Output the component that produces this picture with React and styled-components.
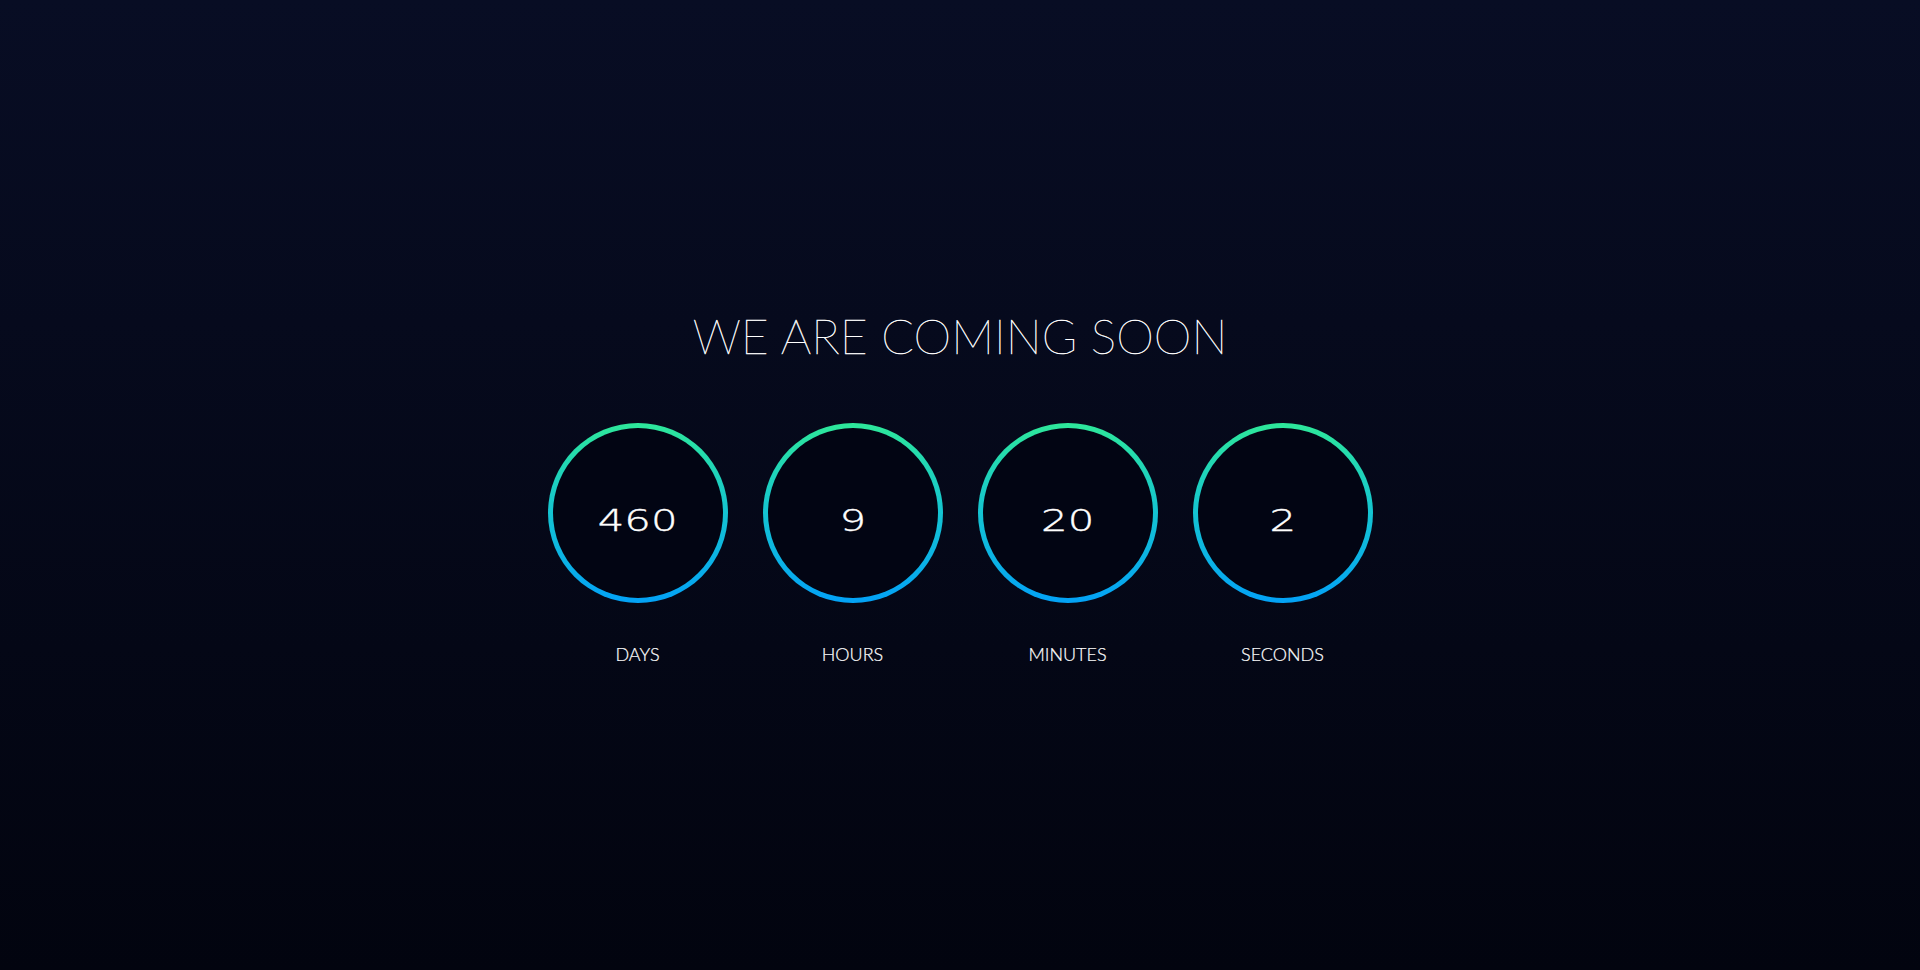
import React from 'react';
import styled, { createGlobalStyle } from 'styled-components';

const GlobalStyle = createGlobalStyle`
    html, body {
        margin: 0;
        padding: 0;
        height: 100%;
    }
    body {
        background: #02040f;
        font-family: Lato, "Open Sans", sans-serif;
        color: #fff;
    }
    #root {
        height: 100%;
    }
`;

// --- Styled Components ---
const Page = styled.main`
    height: 970px;
    display: flex;
    flex-direction: column;
    align-items: center;
    background: linear-gradient(to bottom, #080d24 0%, #02040f 100%);
    overflow: hidden;
`;

const Title = styled.h1`
    margin: 312px 0 0;
    font-family: Lato, sans-serif;
    font-weight: 100;
    font-size: 48px;
    line-height: 48px;
    text-transform: uppercase;
    color: #ffffff;
    -webkit-text-stroke: 0.45px #ffffff;
`;

const Timer = styled.div`
    display: flex;
    gap: 35px;
    margin-top: 63px;
`;

const Unit = styled.div`
    display: flex;
    flex-direction: column;
    align-items: center;
    width: 180px;
`;

const Ring = styled.div`
    width: 180px;
    height: 180px;
    border-radius: 50%;
    padding: 5px;
    box-sizing: border-box;
    background: linear-gradient(to bottom, #2ee89a 0%, #14c4d2 50%, #03a2f6 100%);
    display: flex;
`;

const RingInner = styled.div`
    flex: 1;
    border-radius: 50%;
    background: #020513;
    display: flex;
    align-items: center;
    justify-content: center;
`;

const Value = styled.span`
    display: inline-block;
    margin-top: 15px;
    font-family: "DejaVu Sans", sans-serif;
    font-weight: 200;
    font-size: 31px;
    line-height: 31px;
    color: #fff;
    transform: scaleX(1.35);
    -webkit-text-stroke: 0.4px #fff;
`;

const Label = styled.div`
    margin-top: 40px;
    font-family: Lato, sans-serif;
    font-weight: 300;
    font-size: 18px;
    line-height: 22px;
    text-transform: uppercase;
    color: #ffffff;
    -webkit-text-stroke: 0.2px #ffffff;
`;

const units = [
    { value: 460, label: 'Days' },
    { value: 9, label: 'Hours' },
    { value: 20, label: 'Minutes' },
    { value: 2, label: 'Seconds' },
];

const App = () => (
    <>
        <GlobalStyle />
        <Page>
            <Title>We are coming soon</Title>
            <Timer>
                {units.map(u => (
                    <Unit key={u.label}>
                        <Ring>
                            <RingInner>
                                <Value>{u.value}</Value>
                            </RingInner>
                        </Ring>
                        <Label>{u.label}</Label>
                    </Unit>
                ))}
            </Timer>
        </Page>
    </>
);

export default App;
